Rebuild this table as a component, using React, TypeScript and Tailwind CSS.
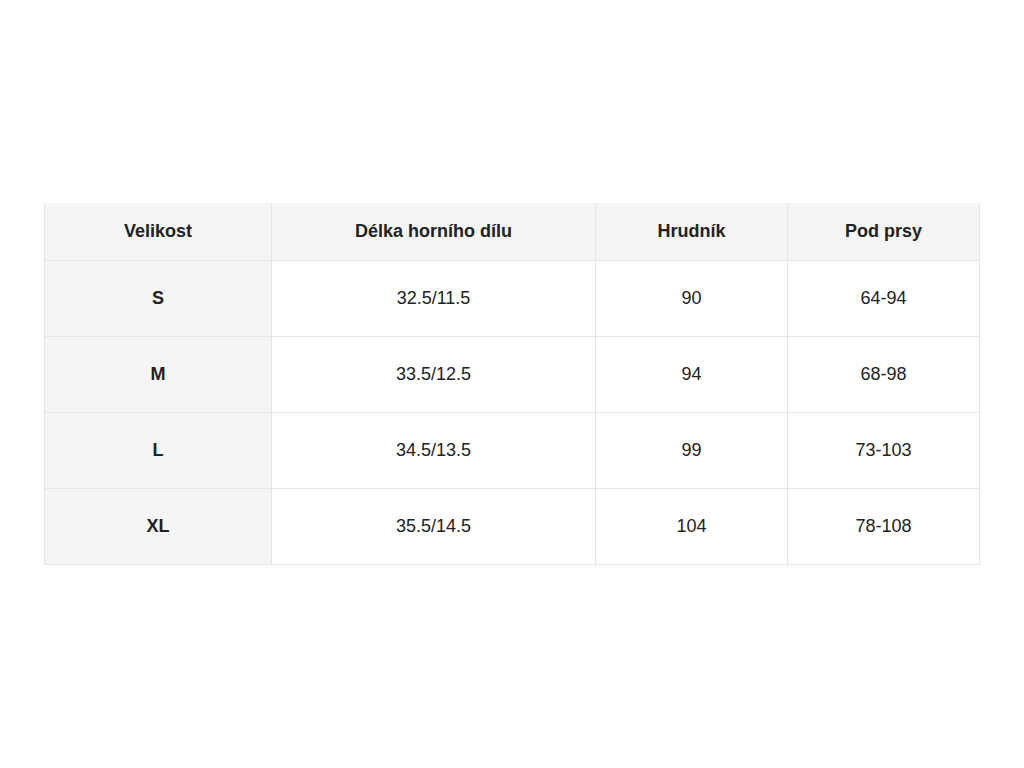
const rows = [
  { size: "S", length: "32.5/11.5", chest: "90", under: "64-94" },
  { size: "M", length: "33.5/12.5", chest: "94", under: "68-98" },
  { size: "L", length: "34.5/13.5", chest: "99", under: "73-103" },
  { size: "XL", length: "35.5/14.5", chest: "104", under: "78-108" },
]

export default function App() {
  return (
    <div className="flex min-h-screen items-center bg-white pl-[44px] text-[#222] font-['Liberation_Sans',Arial,sans-serif] text-[18px]">
      <table className="w-[935px] table-fixed border-collapse text-center">
        <colgroup>
          <col className="w-[227px]" />
          <col className="w-[324px]" />
          <col className="w-[192px]" />
          <col className="w-[192px]" />
        </colgroup>
        <thead>
          <tr className="h-[57px] bg-[#f5f5f5] font-bold">
            <th className="border-x border-b border-[#e5e5e5]">Velikost</th>
            <th className="border-x border-b border-[#e5e5e5]">Délka horního dílu</th>
            <th className="border-x border-b border-[#e5e5e5]">Hrudník</th>
            <th className="border-x border-b border-[#e5e5e5]">Pod prsy</th>
          </tr>
        </thead>
        <tbody>
          {rows.map((r) => (
            <tr key={r.size} className="h-[76px]">
              <td className="border border-[#e5e5e5] bg-[#f5f5f5] font-bold">{r.size}</td>
              <td className="border border-[#e5e5e5]">{r.length}</td>
              <td className="border border-[#e5e5e5]">{r.chest}</td>
              <td className="border border-[#e5e5e5]">{r.under}</td>
            </tr>
          ))}
        </tbody>
      </table>
    </div>
  )
}
